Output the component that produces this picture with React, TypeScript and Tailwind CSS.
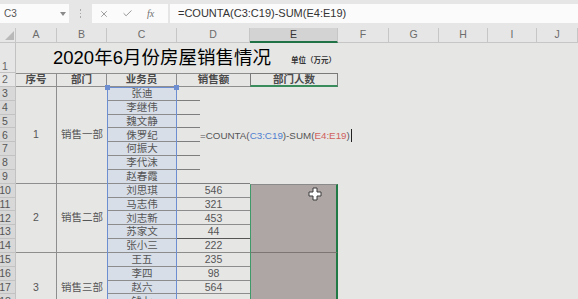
import React from 'react';
import { X, Check } from 'lucide-react';

const CS: Record<number, string> = {
  1: 'col-start-1', 2: 'col-start-2', 3: 'col-start-3', 4: 'col-start-4', 5: 'col-start-5', 6: 'col-start-6',
  7: 'col-start-7', 8: 'col-start-8', 9: 'col-start-9', 10: 'col-start-10', 11: 'col-start-11',
};
const RS: Record<number, string> = {
  1: 'row-start-1', 2: 'row-start-2', 3: 'row-start-3', 4: 'row-start-4', 5: 'row-start-5', 6: 'row-start-6',
  7: 'row-start-7', 8: 'row-start-8', 9: 'row-start-9', 10: 'row-start-10', 11: 'row-start-11', 12: 'row-start-12',
  13: 'row-start-13', 14: 'row-start-14', 15: 'row-start-15', 16: 'row-start-16', 17: 'row-start-17',
  18: 'row-start-18', 19: 'row-start-19', 20: 'row-start-20',
};

const letters = ['A', 'B', 'C', 'D', 'E', 'F', 'G', 'H', 'I', 'J'];
const names = ['张迪', '李继伟', '魏文静', '侏罗纪', '何振大', '李代沫', '赵春霞', '刘思琪', '马志伟', '刘志新', '苏家文', '张小三', '王五', '李四', '赵六', '钱七', ''];
const sales: Record<number, string> = { 10: '546', 11: '321', 12: '453', 13: '44', 14: '222', 15: '235', 16: '98', 17: '564' };

export default function App() {
  return (
    <div className="w-[578px] h-[299px] overflow-hidden bg-[#e6e6e5] font-['Liberation_Sans','Noto_Sans_CJK_SC',sans-serif] text-[#555]">
      {/* formula bar */}
      <div className="h-[28px] flex items-start pt-[4px] bg-[#e6e6e6]">
        <div className="w-[69px] h-[19px] bg-[#fbfbfb] flex items-center justify-between pl-[4px] pr-[3px]">
          <span className="text-[10px] text-[#555]">C3</span>
          <svg width="6" height="4" viewBox="0 0 6 4"><path d="M0 0 L6 0 L3 4 Z" fill="#8a8a8a" /></svg>
        </div>
        <div className="w-[23px] h-[19px] flex flex-col items-center justify-center gap-[2px]">
          <span className="w-[1.5px] h-[1.5px] bg-[#a8a8a8]" />
          <span className="w-[1.5px] h-[1.5px] bg-[#a8a8a8]" />
          <span className="w-[1.5px] h-[1.5px] bg-[#a8a8a8]" />
        </div>
        <div className="w-[76px] h-[19px] bg-[#fbfbfb] flex items-center pl-[7px]">
          <X size={10} strokeWidth={1.6} color="#707070" />
          <Check size={11} strokeWidth={1.6} color="#707070" className="ml-[13px]" />
          <span className="ml-[14px] text-[10px] italic text-[#707070] font-['Liberation_Serif',serif]">fx</span>
        </div>
        <div className="ml-[2px] flex-1 h-[19px] bg-[#fbfbfb] flex items-center pl-[8px]">
          <span className="text-[11px] text-[#333]">=COUNTA(C3:C19)-SUM(E4:E19)</span>
        </div>
      </div>

      {/* sheet */}
      <div className="grid grid-cols-[16px_41px_50px_70px_73px_88px_51px_50px_49px_49px_1fr] grid-rows-[15px_30px_14px_repeat(17,13.83px)]">
        {/* corner */}
        <div className="col-start-1 row-start-1 bg-[#e6e6e6] border-r border-b border-[#c6c6c6] flex items-end justify-end pr-[1px] pb-[2px]">
          <svg width="9" height="9" viewBox="0 0 9 9"><path d="M9 0 L9 9 L0 9 Z" fill="#b9b9b9" /></svg>
        </div>
        {/* column headers */}
        {letters.map((l, i) => (
          <div
            key={l}
            className={`${CS[i + 2]} row-start-1 flex items-center justify-center text-[10.5px] ${
              l === 'E'
                ? 'bg-[#d3d3d3] border-r border-[#c6c6c6] border-b-2 border-b-[#217346] text-[#333]'
                : 'bg-[#e6e6e6] border-r border-b border-[#c6c6c6] text-[#6c6c6c]'
            }`}
          >
            {l}
          </div>
        ))}

        {/* row headers */}
        {Array.from({ length: 19 }, (_, i) => i + 1).map((r) => (
          <div
            key={r}
            className={`col-start-1 ${RS[r + 1]} border-r border-b border-[#c2c2c2] flex justify-center pr-[5px] text-[10.5px] leading-none ${
              r === 1 ? 'items-end pb-[1px] bg-[#e6e6e6] text-[#666]' : r === 2 ? 'items-center bg-[#e6e6e6] text-[#666]' : 'items-center bg-[#d8d8d8] text-[#555]'
            }`}
          >
            {r}
          </div>
        ))}

        {/* title row */}
        <div className="col-start-2 col-span-6 row-start-2 flex items-center pl-[37px]">
          <span className="text-[18.5px] text-black leading-none">2020年6月份房屋销售情况</span>
          <span className="ml-[20px] mt-[6px] text-[7.5px] text-[#333] font-bold">单位（万元）</span>
        </div>

        {/* header row 2 */}
        <div className="col-start-2 row-start-3 border-t border-b border-r border-[#8e8e8e] flex items-center justify-center text-[10.5px] font-bold text-[#4a4a4a]">序号</div>
        <div className="col-start-3 row-start-3 border-t border-b border-r border-[#8e8e8e] flex items-center justify-center text-[10.5px] font-bold text-[#4a4a4a]">部门</div>
        <div className="col-start-4 row-start-3 border-t border-b border-r border-[#8e8e8e] flex items-center justify-center text-[10.5px] font-bold text-[#4a4a4a]">业务员</div>
        <div className="col-start-5 row-start-3 border-t border-b border-[#8e8e8e] flex items-center justify-center text-[10.5px] font-bold text-[#4a4a4a]">销售额</div>
        <div className="col-start-6 row-start-3 border-t border-l border-r border-[#7a7a7a] border-b-2 border-b-[#3a8c5c] flex items-center justify-center text-[10.5px] font-bold text-[#4a4a4a]">部门人数</div>

        {/* groups A/B */}
        <div className="col-start-2 row-start-4 row-span-7 border-r border-b border-[#8e8e8e] flex items-center justify-center text-[10.5px]">1</div>
        <div className="col-start-3 row-start-4 row-span-7 border-b border-[#8e8e8e] flex items-center justify-center text-[10.5px]">销售一部</div>
        <div className="col-start-2 row-start-11 row-span-5 border-r border-b border-[#8e8e8e] flex items-center justify-center text-[10.5px]">2</div>
        <div className="col-start-3 row-start-11 row-span-5 border-b border-[#8e8e8e] flex items-center justify-center text-[10.5px]">销售二部</div>
        <div className="col-start-2 row-start-16 row-span-5 border-r border-[#8e8e8e] flex items-center justify-center text-[10.5px]">3</div>
        <div className="col-start-3 row-start-16 row-span-5 border-[#8e8e8e] flex items-center justify-center text-[10.5px]">销售三部</div>

        {/* names C */}
        {names.map((n, i) => (
          <div
            key={i}
            className={`col-start-4 ${RS[i + 4]} bg-[#d8dee7] border-b border-[#8c8c8c] flex items-center justify-center text-[10.5px] leading-none text-[#555]`}
          >
            {n}
          </div>
        ))}

        {/* D rows 3-8 short lines */}
        {[3, 4, 5, 6, 7, 8].map((r) => (
          <div key={r} className={`col-start-5 ${RS[r + 1]} flex items-end`}>
            <div className="w-[23px] border-b border-[#7e7e7e]" />
          </div>
        ))}
        <div className="col-start-5 row-start-10 border-b border-[#7e7e7e]" />

        {/* D values */}
        {[10, 11, 12, 13, 14, 15, 16, 17, 18, 19].map((r) => (
          <div
            key={r}
            className={`col-start-5 ${RS[r + 1]} border-b ${r === 13 ? 'border-[#555]' : 'border-[#8c8c8c]'} flex items-center justify-center text-[10.5px] leading-none text-[#555]`}
          >
            {sales[r] ?? ''}
          </div>
        ))}

        {/* in-cell formula editor */}
        <div className="col-start-5 col-span-3 row-start-7 flex items-center pl-[23px] text-[9.8px] leading-none whitespace-nowrap">
          <span className="text-[#555]">=COUNTA(</span>
          <span className="text-[#4f7fd0]">C3:C19</span>
          <span className="text-[#555]">)-SUM(</span>
          <span className="text-[#d0625c]">E4:E19</span>
          <span className="text-[#555]">)</span>
          <span className="ml-[1px] w-[1px] h-[13px] bg-[#222]" />
        </div>

        {/* E merged selected */}
        <div className="col-start-6 row-start-11 row-span-5 relative bg-[#ada6a4] border-t border-t-[#8a8a8a] border-l-[1.5px] border-l-[#3f9a6a] border-r-2 border-r-[#1f7a45] border-b border-b-[#7b7674]">
          <svg className="absolute left-[57px] top-[2px]" width="14" height="14" viewBox="0 0 14 14">
            <path d="M5 1 H9 V5 H13 V9 H9 V13 H5 V9 H1 V5 H5 Z" fill="#ffffff" stroke="#3a3a3a" strokeWidth="1" />
          </svg>
        </div>
        <div className="col-start-6 row-start-16 row-span-5 bg-[#ada6a4] border-l-[1.5px] border-l-[#3f9a6a] border-r-2 border-r-[#1f7a45]" />

        {/* reference selection border on C3:C19 */}
        <div className="col-start-4 row-start-4 row-span-17 relative border-t-[1.5px] border-x-[1.5px] border-[#6d8fd2] pointer-events-none">
          <span className="absolute -top-[3px] -left-[3px] w-[5px] h-[5px] bg-[#6d8fd2]" />
          <span className="absolute -top-[3px] -right-[3px] w-[5px] h-[5px] bg-[#6d8fd2]" />
        </div>
      </div>
    </div>
  );
}
